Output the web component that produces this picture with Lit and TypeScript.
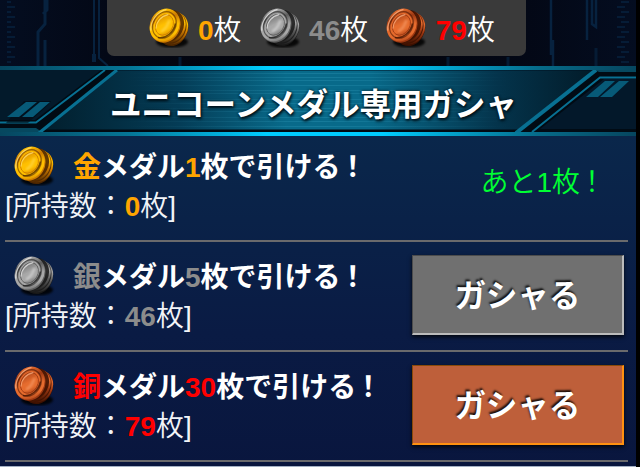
import { LitElement, html, css, svg, nothing } from "lit";
import { customElement, property } from "lit/decorators.js";

type Metal = "gold" | "silver" | "bronze";

// light, mid, deep, dark
const METALS: Record<Metal, string[]> = {
  gold: ["#ffe680", "#ffc000", "#cc7a00", "#4a2400"],
  silver: ["#f4f4f4", "#a8a8a8", "#5c5c5c", "#181818"],
  bronze: ["#ffb88c", "#e66c2e", "#9c3812", "#3c1000"],
};

const GACHAS: {
  metal: Metal;
  label: string;
  cost: number;
  owned: number;
  state?: "off" | "on";
}[] = [
  { metal: "gold", label: "金", cost: 1, owned: 0 },
  { metal: "silver", label: "銀", cost: 5, owned: 46, state: "off" },
  { metal: "bronze", label: "銅", cost: 30, owned: 79, state: "on" },
];

const metalColors = css`
  .gold {
    color: #ffa500;
  }
  .silver {
    color: #8c8c8c;
  }
  .bronze {
    color: #ff0000;
  }
`;

/**
 * Two stacked coins seen at an angle.
 */
@customElement("medal-icon")
export class MedalIcon extends LitElement {
  @property({ type: String }) metal: Metal = "gold";

  static styles = css`
    :host {
      display: block;
      flex: none;
      width: 41px;
      height: 40px;
    }
    svg {
      display: block;
    }
  `;

  render() {
    const [light, mid, deep, dark] = METALS[this.metal];
    return html`<svg width="41" height="40" viewBox="0 0 41 40">
      <defs>
        <linearGradient id="edge" x1="0.3" y1="0" x2="0.7" y2="1">
          <stop offset="0" stop-color=${deep} />
          <stop offset="0.35" stop-color=${mid} />
          <stop offset="0.6" stop-color=${deep} />
          <stop offset="1" stop-color=${dark} />
        </linearGradient>
        <linearGradient id="rim" x1="0.1" y1="0" x2="0.9" y2="1">
          <stop offset="0" stop-color=${light} />
          <stop offset="0.12" stop-color=${mid} />
          <stop offset="0.32" stop-color=${deep} />
          <stop offset="0.55" stop-color=${mid} />
          <stop offset="0.75" stop-color=${mid} />
          <stop offset="1" stop-color=${deep} />
        </linearGradient>
        <linearGradient id="face" x1="0" y1="0" x2="1" y2="0.9">
          <stop offset="0" stop-color=${deep} />
          <stop offset="0.5" stop-color=${mid} />
          <stop offset="0.7" stop-color=${mid} />
          <stop offset="1" stop-color=${deep} />
        </linearGradient>
        <filter id="soft" x="-20%" y="-20%" width="140%" height="140%">
          <feGaussianBlur stdDeviation="1.1" />
        </filter>
      </defs>
      <ellipse cx="23" cy="34" rx="16" ry="5.5" fill="#000" opacity="0.85" filter="url(#soft)" />
      <g transform="rotate(28 24.5 21)">
        <ellipse cx="24.8" cy="21.6" rx="14" ry="17" fill=${dark} />
        <ellipse cx="24.5" cy="20.6" rx="13.8" ry="16.6" fill="url(#edge)" />
        <ellipse cx="22.8" cy="20.6" rx="13.8" ry="16.4" fill=${dark} opacity="0.8" />
        <ellipse cx="21.6" cy="20.2" rx="13.8" ry="16.4" fill="url(#edge)" />
        <ellipse cx="19.6" cy="20" rx="13.8" ry="16.4" fill=${dark} opacity="0.85" />
      </g>
      <g transform="rotate(30 15.5 17)">
        <ellipse cx="16.8" cy="17.6" rx="14.6" ry="17" fill=${deep} />
        <ellipse cx="15.6" cy="17" rx="14.4" ry="17" fill="url(#rim)" />
        <ellipse cx="15.4" cy="17" rx="11.2" ry="13.8" fill="none" stroke=${dark} stroke-width="1.2" opacity="0.55" />
        <ellipse cx="15.4" cy="17" rx="9.4" ry="12" fill="url(#face)" stroke=${mid} stroke-width="1.2" />
        <ellipse cx="15.4" cy="17" rx="8.4" ry="10.8" fill="none" stroke=${deep} stroke-width="0.8" />
      </g>
      <path d="M1.8 22C1.2 13 8 4 17 1.6" fill="none" stroke=${light} stroke-width="1.3" stroke-linecap="round" opacity="0.7" />
      <path d="M7 20C7.2 14 12 8 19 6.6" fill="none" stroke=${light} stroke-width="1.1" stroke-linecap="round" opacity="0.7" />
      <path d="M9 29.5C17 31 25 24 26.5 15.5" fill="none" stroke=${dark} stroke-width="1.6" opacity="0.75" />
      <path d="M13 23Q18 20 20 13" fill="none" stroke=${light} stroke-width="2.4" stroke-linecap="round" opacity="0.45" filter="url(#soft)" />
    </svg>`;
  }
}

/**
 * Section heading on a metallic blue plate.
 */
@customElement("title-banner")
export class TitleBanner extends LitElement {
  static styles = css`
    :host {
      display: grid;
      height: 70px;
    }
    svg,
    .title {
      grid-area: 1 / 1;
    }
    .title {
      box-sizing: border-box;
      height: 70px;
      margin: 0;
      padding-right: 9px;
      font-size: 31.5px;
      font-weight: 700;
      line-height: 78px;
      text-align: center;
      white-space: nowrap;
      color: #fff;
      text-shadow:
        0 0 3px #001018,
        1px 2px 3px #001018;
      z-index: 1;
    }
  `;

  render() {
    return html`
      <svg width="636" height="70" viewBox="0 0 636 70">
        <defs>
          <linearGradient id="frame" gradientUnits="userSpaceOnUse" x1="0" x2="636" y1="0" y2="0">
            <stop offset="0" stop-color="#06465f" />
            <stop offset="0.2" stop-color="#057595" />
            <stop offset="0.42" stop-color="#00ccff" />
            <stop offset="0.6" stop-color="#00ccff" />
            <stop offset="0.85" stop-color="#066a88" />
            <stop offset="1" stop-color="#06465f" />
          </linearGradient>
          <linearGradient id="plate" gradientUnits="userSpaceOnUse" x1="0" x2="636" y1="0" y2="0">
            <stop offset="0.08" stop-color="#02202f" />
            <stop offset="0.28" stop-color="#043c56" />
            <stop offset="0.45" stop-color="#086a8a" />
            <stop offset="0.58" stop-color="#086a8a" />
            <stop offset="0.78" stop-color="#04344c" />
            <stop offset="0.93" stop-color="#021c2a" />
          </linearGradient>
          <linearGradient id="fade" gradientUnits="userSpaceOnUse" x1="0" x2="636" y1="0" y2="0">
            <stop offset="0.2" stop-color="#5fd0ee" stop-opacity="0" />
            <stop offset="0.5" stop-color="#5fd0ee" stop-opacity="0.16" />
            <stop offset="0.8" stop-color="#5fd0ee" stop-opacity="0" />
          </linearGradient>
        </defs>
        <rect width="636" height="70" fill="url(#frame)" />
        <rect y="4" width="636" height="62" fill="url(#plate)" />
        ${[7, 11, 14, 19, 24, 27, 33, 37, 42, 45, 51, 55, 60].map(
          (y) => svg`<rect y=${y} width="636" height="1" fill="url(#fade)" />`,
        )}
        <rect y="4" width="636" height="1" fill="#012" opacity="0.5" />
        <rect x="38" y="63.5" width="598" height="2.5" fill="#010a12" />
        <polygon points="0,4 118,4 40,66 38,70 0,70" fill="#010b14" />
        <polygon points="0,4 101,4 35,54 0,54" fill="#031a2b" />
        <polygon points="0,62 36,62 42,66 38,70 0,70" fill="#06485f" />
        <polyline points="0,56.5 36,56.5 105,4" fill="none" stroke="#087092" stroke-width="2" />
        <polyline points="39,67 117,4" fill="none" stroke="#087092" stroke-width="3" />
        <polygon points="24,35 51,35 48,39 28,57 6,57" fill="#010a12" opacity="0.6" />
        <polygon points="26,36 37,36 19,51 7,51" fill="#075a78" />
        <polygon points="40,36 50,36 33,51 22,51" fill="#075a78" />
        <polygon points="596,4 636,4 636,66 517,66" fill="#010b14" />
        <polygon points="604,13 636,13 636,63 540,63" fill="#03182a" />
        <polygon points="595,4 636,4 636,6 599,6" fill="#06485f" />
        <polyline points="516,67 596,4" fill="none" stroke="#087092" stroke-width="4" />
        <polyline points="532,66 600,11.5 636,11.5" fill="none" stroke="#087092" stroke-width="2" />
        <polygon points="605,15 615,15 598,31 586,31" fill="#075a78" />
        <polygon points="619,15 629,15 612,31 600,31" fill="#075a78" />
        <rect width="636" height="4" fill="url(#frame)" />
        <rect y="66" width="636" height="4" fill="url(#frame)" />
      </svg>
      <h1 class="title"><slot></slot></h1>
    `;
  }
}

@customElement("gacha-row")
export class GachaRow extends LitElement {
  @property({ type: String }) metal: Metal = "gold";
  @property({ type: String }) label = "";
  @property({ type: Number }) cost = 0;
  @property({ type: Number }) owned = 0;
  @property({ type: String }) state = "on";

  static styles = [
    metalColors,
    css`
      :host {
        display: flex;
        justify-content: space-between;
        box-sizing: border-box;
        height: 110px;
        margin: 0 8px 0 5px;
        padding-top: 4px;
        border-bottom: 2px solid #6a6a6c;
      }
      .head {
        display: flex;
        gap: 17px;
        height: 44px;
        padding: 10px 0 0 9px;
      }
      .name {
        font-weight: 700;
        line-height: 40px;
        padding: 2px 0 0 1px;
        color: #fff;
      }
      .owned {
        line-height: 34px;
        font-weight: 350;
      }
      b {
        font-weight: 700;
      }
      .mark {
        margin-left: -2px;
      }
      .remaining {
        padding: 27px 22px 0 0;
        line-height: 40px;
        font-weight: 350;
        color: #00ff33;
      }
      .play {
        box-sizing: border-box;
        width: 212px;
        height: 80px;
        margin: 9px 4px 0 0;
        padding: 4px 0 0;
        border: 2px solid;
        border-width: 1px 2px 2px 1px;
        font: inherit;
        font-size: 31.4px;
        font-weight: 700;
        line-height: 73px;
        color: #fff;
        text-shadow: -1px -2px 2px rgba(0, 0, 0, 0.85);
        box-shadow: 0 2px 4px rgba(0, 0, 0, 0.8);
      }
      .off {
        background: #707070;
        border-color: #4c4c4c #bbb #bbb #4c4c4c;
      }
      .on {
        background: #be5f3a;
        border-color: #8a4a08 #ff9010 #ff9010 #8a4a08;
      }
    `,
  ];

  render() {
    const missing = this.cost - this.owned;
    return html`
      <div>
        <div class="head">
          <medal-icon metal=${this.metal}></medal-icon>
          <div class="name">
            <span class=${this.metal}>${this.label}</span>メダル<span class=${this.metal}>${this.cost}</span>枚で引ける<span class="mark">！</span>
          </div>
        </div>
        <div class="owned">[所持数：<b class=${this.metal}>${this.owned}</b>枚]</div>
      </div>
      ${missing > 0
        ? html`<div class="remaining">あと${missing}枚<span class="mark">！</span></div>`
        : html`<button class="play ${this.state}">ガシャる</button>`}
    `;
  }
}

@customElement("app-root")
export class AppRoot extends LitElement {
  static styles = [
    metalColors,
    css`
      :host {
        display: block;
        width: 640px;
        height: 467px;
        overflow: hidden;
        background: #000;
        color: #f2f4f8;
        font-family: "Liberation Sans", "Noto Sans CJK JP", sans-serif;
        font-size: 28px;
        white-space: nowrap;
      }
      .page {
        width: 636px;
      }
      .top {
        display: grid;
        height: 66px;
        background: linear-gradient(90deg, #040d20, #030714 20%, #010208 50%, #030714 80%, #040d20);
      }
      .circuit,
      .wallet {
        grid-area: 1 / 1;
      }
      .wallet {
        display: flex;
        gap: 18px;
        box-sizing: border-box;
        width: 419px;
        height: 56px;
        margin-left: 107px;
        padding: 8px 0 0 41.5px;
        border-radius: 0 0 7px 7px;
        background: #3a3a3a;
        z-index: 1;
      }
      .count {
        display: flex;
        gap: 8.5px;
        line-height: 45px;
        font-weight: 350;
        color: #fff;
      }
      b {
        font-weight: 700;
      }
      .list {
        height: 330px;
        background: linear-gradient(#0a274b, #0a1b44 60%, #09163e);
      }
      gacha-row:first-child {
        height: 106px;
        padding-top: 0;
      }
      .next {
        height: 1px;
        background: #a3b0c4;
      }
    `,
  ];

  render() {
    return html`
      <div class="page">
        <div class="top">
          <svg class="circuit" width="636" height="66" viewBox="0 0 636 66" fill="none" stroke="#07223f">
            ${[1, 6, 11, 16, 21, 26, 31, 36, 41, 46, 51, 56, 61].map(
              (y, i) => svg`<path d="M7 ${y + 1}h${i % 2 ? 8 : 4}M${i % 2 ? 617 : 621} ${y + 1}h8" stroke-width="1.5" />`,
            )}
            <path d="M47 0V10L43 14M45 0V24L38 32V66M45 40V66" stroke-width="3" />
            <path d="M94 0V62M99 0V58L108 66" stroke-width="2" />
            <path d="M94 54V62" stroke-width="4" />
            <path d="M551 0V55M553 40V66M587 0V40M592 0V24L596 27V0" stroke-width="2.5" />
            <path d="M596 48V66M180 57V66M448 57V66M508 57V66" stroke-width="3" opacity="0.7" />
          </svg>
          <div class="wallet">
            ${GACHAS.map(
              (g) => html`<div class="count">
                <medal-icon metal=${g.metal}></medal-icon>
                <span><b class=${g.metal}>${g.owned}</b>枚</span>
              </div>`,
            )}
          </div>
        </div>
        <title-banner>ユニコーンメダル専用ガシャ</title-banner>
        <div class="list">
          ${GACHAS.map(
            (g) => html`<gacha-row
              metal=${g.metal}
              label=${g.label}
              cost=${g.cost}
              owned=${g.owned}
              state=${g.state ?? nothing}
            ></gacha-row>`,
          )}
        </div>
        <div class="next"></div>
      </div>
    `;
  }
}
